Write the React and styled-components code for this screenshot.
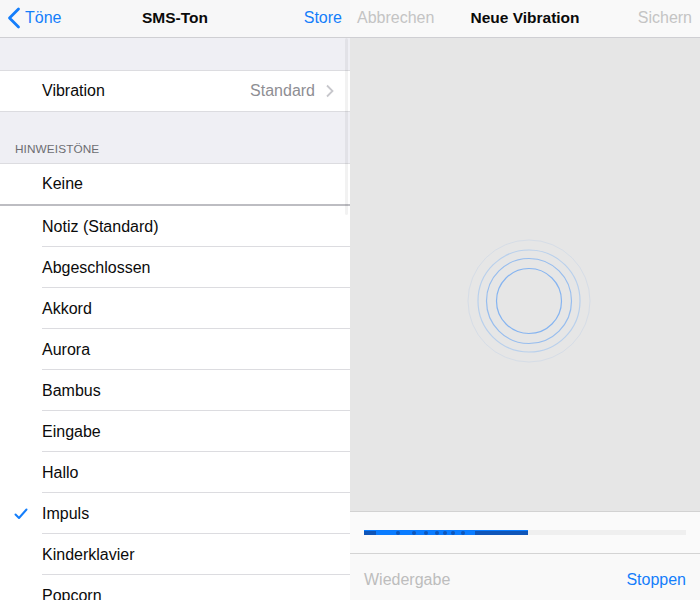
import React from "react"
import styled, { createGlobalStyle } from "styled-components"

const GlobalStyle = createGlobalStyle`
body {
margin: 0;
font-family: "Liberation Sans", Arial, sans-serif;
-webkit-font-smoothing: antialiased;
}
`

const BLUE = "#147efb"

const tones = [
    "Notiz (Standard)",
    "Abgeschlossen",
    "Akkord",
    "Aurora",
    "Bambus",
    "Eingabe",
    "Hallo",
    "Impuls",
    "Kinderklavier",
    "Popcorn",
]

const dots = [398, 414, 426, 437, 445, 453, 463]

const App = () => {
    return (
        <Screen>
            <GlobalStyle />
            <Panel>
                <NavBar>
                    <NavButton side="left" color={BLUE}>
                        <svg width="14" height="22" viewBox="0 0 14 22">
                            <path d="M11.5 2 L2.5 11 L11.5 20" fill="none" stroke={BLUE} strokeWidth="2.8" strokeLinecap="round" strokeLinejoin="round" />
                        </svg>
                        Töne
                    </NavButton>
                    <NavTitle>SMS-Ton</NavTitle>
                    <NavButton side="right" color={BLUE}>Store</NavButton>
                </NavBar>
                <ListBody>
                    <Spacer />
                    <Group>
                        <Row>
                            <Label>Vibration</Label>
                            <Detail>
                                Standard
                                <svg width="9" height="14" viewBox="0 0 9 14">
                                    <path d="M2 1.5 L7.5 7 L2 12.5" fill="none" stroke="#c7c7cc" strokeWidth="1.8" />
                                </svg>
                            </Detail>
                        </Row>
                    </Group>
                    <SectionHeader>HINWEISTÖNE</SectionHeader>
                    <Group>
                        <Row>
                            <Label>Keine</Label>
                        </Row>
                    </Group>
                    <ThickDivider />
                    {tones.map((t) => (
                        <ToneRow key={t}>
                            <Check>
                                {t === "Impuls" && (
                                    <svg width="14" height="12" viewBox="0 0 14 12">
                                        <path d="M1.5 6.5 L5 10 L12.5 1.5" fill="none" stroke={BLUE} strokeWidth="2" strokeLinecap="round" strokeLinejoin="round" />
                                    </svg>
                                )}
                            </Check>
                            <Label>{t}</Label>
                        </ToneRow>
                    ))}
                </ListBody>
                <ScrollIndicator />
            </Panel>
            <Panel>
                <NavBar light>
                    <NavButton side="left" color="#c4c4c4">Abbrechen</NavButton>
                    <NavTitle>Neue Vibration</NavTitle>
                    <NavButton side="right" color="#c4c4c4">Sichern</NavButton>
                </NavBar>
                <Canvas>
                    <svg width="130" height="130" viewBox="0 0 130 130">
                        <circle cx="65" cy="65" r="61" fill="none" stroke="#d6dde6" strokeWidth="1" />
                        <circle cx="65" cy="65" r="51" fill="none" stroke="#b9d0ec" strokeWidth="1.2" />
                        <circle cx="65" cy="65" r="42.5" fill="none" stroke="#97bdee" strokeWidth="1.2" />
                        <circle cx="65" cy="65" r="32.5" fill="none" stroke="#86b4f0" strokeWidth="1.2" />
                    </svg>
                </Canvas>
                <ProgressArea>
                    <Track>
                        <Fill>
                            <DarkSegment start={0} width={12} />
                            {dots.map((d) => (
                                <Dot key={d} style={{ left: d - 364 - 2 }} />
                            ))}
                            <DarkSegment start={111} width={53} />
                        </Fill>
                    </Track>
                </ProgressArea>
                <Toolbar>
                    <ToolButton color="#bdbdbd">Wiedergabe</ToolButton>
                    <ToolButton color={BLUE}>Stoppen</ToolButton>
                </Toolbar>
            </Panel>
        </Screen>
    )
}

const Screen = styled.div`
display: flex;
width: 700px;
height: 600px;
overflow: hidden;
`

const Panel = styled.div`
position: relative;
width: 350px;
height: 600px;
display: flex;
flex-direction: column;
overflow: hidden;
background: #efeff4;
`

const NavBar = styled.div`
flex: none;
height: 37px;
box-sizing: content-box;
border-bottom: 1px solid #cfcfd3;
background: ${(p) => (p.light ? "#f9f9f9" : "#f7f7f8")};
display: flex;
align-items: center;
justify-content: center;
position: relative;
`

const NavTitle = styled.div`
font-size: 15.5px;
font-weight: 700;
color: #0a0a0a;
margin-bottom: 2px;
`

const NavButton = styled.div`
position: absolute;
top: 0;
bottom: 2px;
${(p) => (p.side === "left" ? "left: 7px;" : "right: 8px;")}
display: flex;
align-items: center;
gap: 4px;
font-size: 16px;
color: ${(p) => p.color};
`

const ListBody = styled.div`
flex: 1;
display: flex;
flex-direction: column;
`

const Spacer = styled.div`
height: 32px;
flex: none;
`

const Group = styled.div`
background: #fff;
border-top: 1px solid #dcdce0;
border-bottom: 1px solid #dcdce0;
flex: none;
`

const Row = styled.div`
height: 40px;
display: flex;
align-items: center;
justify-content: space-between;
padding: 0 16px 0 42px;
`

const Label = styled.div`
font-size: 16px;
color: #0b0b0b;
`

const Detail = styled.div`
display: flex;
align-items: center;
gap: 10px;
font-size: 16px;
color: #8e8e93;
`

const SectionHeader = styled.div`
flex: none;
height: 51px;
box-sizing: border-box;
padding: 0 15px 7px;
display: flex;
align-items: flex-end;
font-size: 11.8px;
color: #6d6d72;
letter-spacing: 0.1px;
`

const ThickDivider = styled.div`
flex: none;
height: 2px;
margin-top: -1px;
background: #bdbdc2;
`

const ToneRow = styled.div`
flex: none;
height: 41px;
box-sizing: border-box;
display: flex;
align-items: center;
background: #fff;
position: relative;
&::after {
content: "";
position: absolute;
left: 42px;
right: 0;
bottom: 0;
height: 1px;
background: #dcdce0;
}
`

const Check = styled.div`
width: 42px;
padding-left: 14px;
box-sizing: border-box;
display: flex;
align-items: center;
`

const ScrollIndicator = styled.div`
position: absolute;
left: 345px;
top: 38px;
width: 2.5px;
height: 177px;
border-radius: 2px;
background: rgba(0, 0, 0, 0.05);
`

const Canvas = styled.div`
flex: none;
height: 474px;
box-sizing: border-box;
background: #e6e6e6;
display: flex;
justify-content: center;
align-items: flex-start;
padding-top: 198px;
padding-left: 8px;
border-bottom: 1px solid #d2d2d2;
`

const ProgressArea = styled.div`
flex: none;
height: 41px;
background: #fafafa;
border-bottom: 1px solid #d4d4d4;
display: flex;
align-items: center;
padding: 0 14px;
`

const Track = styled.div`
flex: 1;
height: 5px;
background: #efefef;
position: relative;
`

const Fill = styled.div`
position: absolute;
left: 0;
top: 0;
height: 5px;
width: 164px;
background: #0a7cff;
`

const DarkSegment = styled.div`
position: absolute;
top: 0.5px;
height: 4px;
left: ${(p) => p.start}px;
width: ${(p) => p.width}px;
background: #0f55b8;
`

const Dot = styled.div`
position: absolute;
top: 0.5px;
width: 4px;
height: 4px;
border-radius: 50%;
background: #0f55b8;
`

const Toolbar = styled.div`
flex: 1;
background: #f9f9f9;
display: flex;
align-items: center;
justify-content: space-between;
padding: 6px 14px 0;
`

const ToolButton = styled.div`
font-size: 16px;
color: ${(p) => p.color};
`

export default App
